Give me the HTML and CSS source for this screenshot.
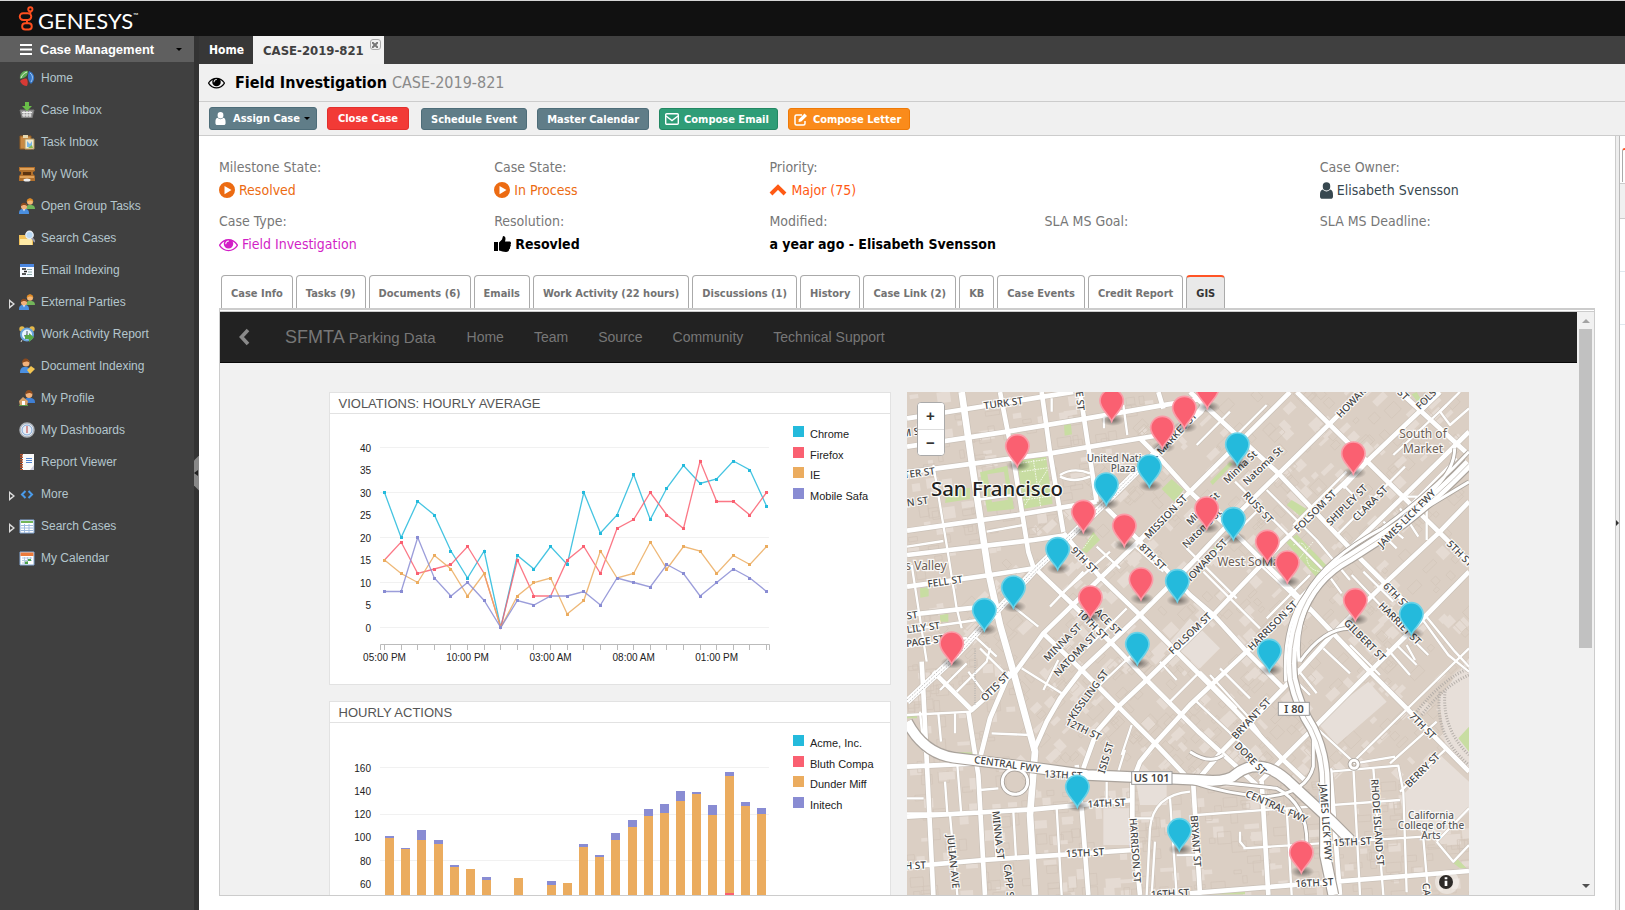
FILE: index.html
```html
<!DOCTYPE html>
<html lang="en">
<head>
<meta charset="utf-8">
<title>CASE-2019-821</title>
<link rel="stylesheet" href="styles.css">
</head>
<body>
<svg class="defs" aria-hidden="true">
  <symbol id="eye" viewBox="0 0 1792 1792"><path d="M1664 960q-152-236-381-353 61 104 61 225 0 185-131.500 316.500t-316.500 131.500-316.500-131.500-131.500-316.500q0-121 61-225-229 117-381 353 133 205 333.500 326.500t434.500 121.500 434.500-121.500 333.500-326.500zm-720-384q0-20-14-34t-34-14q-125 0-214.500 89.500t-89.500 214.500q0 20 14 34t34 14 34-14 14-34q0-86 61-147t147-61q20 0 34-14t14-34zm848 384q0 34-20 69-140 230-376.500 368.500t-499.500 138.500-499.500-139-376.500-368q-20-35-20-69t20-69q140-229 376.500-368t499.500-139 499.500 139 376.500 368q20 35 20 69z"/></symbol>
  <symbol id="play" viewBox="0 0 16 16"><path fill-rule="evenodd" d="M8 0a8 8 0 1 1 0 16A8 8 0 0 1 8 0zM5.500 4v8.200l7-4.100z"/></symbol>
  <symbol id="user" viewBox="0 0 14 18"><rect x="3" y="0" width="8" height="9" rx="4"/><path d="M3 8c2 2.600 6 2.600 8 0 2.500.5 3 3 3 6v1.500c0 1.500-1 2.500-2.500 2.500h-9C1 18 0 17 0 15.500V14c0-3 .5-5.500 3-6z"/></symbol>
  <symbol id="people" viewBox="0 0 16 16"><path d="M7 11c0-4 2-4 4-4s5 0 5 4z" fill="#72b55a"/><circle cx="11" cy="3.800" r="3" fill="#f5b877"/><path d="M7.600 4C8-1 14-1 14.400 4 13 1.700 9.500 2 7.600 4z" fill="#e08a24"/><path d="M0 16c0-5 2-5 5-5s5 0 5 5z" fill="#4a8fe0"/><path d="M4 11h2l-1 2.500z" fill="#fff"/><circle cx="5" cy="8.500" r="3" fill="#f2b27c"/><path d="M1.700 8.500c0-5 6-5 6.600 0C7 6.500 3.500 6.500 1.700 8.500z" fill="#8b4a1e"/></symbol>
  <radialGradient id="shade"><stop offset="0" stop-opacity=".5"/><stop offset="1" stop-opacity="0"/></radialGradient>
  <symbol id="pin" viewBox="0 0 78 104" overflow="visible"><ellipse class="pin-shade" cx="42" cy="95" rx="36" ry="18"/><path class="pin-body" d="M39 99C30 78 4 62 4 38a35 35 0 0 1 70 0c0 24-26 40-35 61z"/></symbol>
</svg>

<header class="brandbar">
  <svg class="logo-mark" viewBox="0 0 16 26" fill="none" stroke="#ff4f1f" stroke-width="2"><circle cx="12.500" cy="3.500" r="2.200"/><rect x="1.500" y="7.500" width="12" height="7" rx="3.500"/><rect x="4" y="18" width="10" height="6.500" rx="3.200"/><path d="M9 14.500V18M12.500 6v2"/></svg>
  <span class="logo-text">GENESYS</span><span class="logo-tm">™</span>
</header>

<div class="shell">
  <nav class="sidebar" aria-label="Case Management">
    <button class="side-head"><svg width="12" height="11" viewBox="0 0 12 11"><path d="M0 1h12M0 5.500h12M0 10h12" stroke="#fff" stroke-width="2"/></svg><span>Case Management</span><i class="caret"></i></button>
    <ul class="side-list">
      <li><a href="#"><svg viewBox="0 0 16 16"><path d="M1 9C0 3 5 0 9 1c0 5-3 7-8 8z" fill="#5cab55"/><path d="M2 8C3 5 5 3 8 2" stroke="#d7f2cd" fill="none"/><path d="M10 1c6 2 7 9 2 13-3-3-4-8-2-13z" fill="#3677c8"/><path d="M11 3c3 2 3 6 1 9" stroke="#a9ccf3" fill="none"/><path d="M1 11c2-2 5-3 7-2 1 2 1 5 0 7-3 0-6-2-7-5z" fill="#d63a35"/></svg>Home</a></li>
      <li><a href="#"><svg viewBox="0 0 16 16"><path d="M1 8h14l-2 8H3z" fill="#999" stroke="#777"/><path d="M3 10.500h10M3 13h9M5 9v6M8 9v6M11 9v6" stroke="#eee"/><path d="M6 0h4v4h3L8 9 3 4h3z" fill="#69bd48"/></svg>Case Inbox</a></li>
      <li><a href="#"><svg viewBox="0 0 16 16"><path d="M1 2h11v13H1z" fill="#c98a45" stroke="#8f5a22"/><path d="M4 1h5v3H4z" fill="#e8d9b0"/><path d="M6 5h9v10H6z" fill="#f2ead0" stroke="#b89a5e"/><path d="m8 7 3 3 2-3v6H8z" fill="#79b6e4"/><path d="M9 14l4-3 1 3z" fill="#88b94f"/></svg>Task Inbox</a></li>
      <li><a href="#"><svg viewBox="0 0 16 16"><path d="M0 1h16v4l-2 1v2l2 2v5H0v-5l2-2V6L0 5z" fill="#b06f2c"/><path d="M1 3h14M1 11h14" stroke="#f0b367" stroke-width="1.500"/><path d="M4 6h8v3H4z" fill="#5c3310"/><ellipse cx="8" cy="14" rx="3.500" ry="1.500" fill="#eee"/></svg>My Work</a></li>
      <li><a href="#"><svg><use href="#people"/></svg>Open Group Tasks</a></li>
      <li><a href="#"><svg viewBox="0 0 16 16"><path d="M0 5h6l1 2h7v8H0z" fill="#f2c25a"/><path d="M1 9h12v6H1z" fill="#ffeaa6"/><circle cx="10.500" cy="5" r="3.700" fill="#b9d9f5" stroke="#e8eef5" stroke-width="1.400"/><path d="m13 8 3 4" stroke="#99a" stroke-width="2"/></svg>Search Cases</a></li>
      <li><a href="#"><svg viewBox="0 0 16 16"><path d="M1 2h14v13H1z" fill="#f7faff"/><path d="M1 2h14v3H1z" fill="#4b87e0"/><path d="M3 7h4M5 9.500h3M3 12h4" stroke="#222" stroke-width="1.500"/><path d="M8 7.500h5M9 10h4M8 12.500h5" stroke="#8aa"/></svg>Email Indexing</a></li>
      <li class="branch"><a href="#"><svg><use href="#people"/></svg>External Parties</a></li>
      <li><a href="#"><svg viewBox="0 0 16 16"><circle cx="3" cy="3" r="2.700" fill="#e4b84a"/><circle cx="13" cy="3" r="2.700" fill="#e4b84a"/><circle cx="8" cy="8.500" r="6" fill="#eaf4fd" stroke="#6aa5dc" stroke-width="2"/><path d="M8 5v4l-3 1" stroke="#456" fill="none"/><path d="M6 9h4V7l5 4.500L10 16v-3H6z" fill="#58a845"/><path d="m3 14-1 2" stroke="#ccc"/></svg>Work Activity Report</a></li>
      <li><a href="#"><svg viewBox="0 0 16 16"><path d="M1 15c0-5 2-6 5-6s6 1 6 6z" fill="#4a8fe0"/><circle cx="7" cy="5" r="3.500" fill="#f2b27c"/><path d="M3 5c0-6 7-6 8 0C9 3 6 3 3 5z" fill="#8b4a1e"/><path d="m8 12 4-4 4 3-5 5z" fill="#f3c552"/></svg>Document Indexing</a></li>
      <li><a href="#"><svg viewBox="0 0 16 16"><path d="M5 13c0-5 2-5 5-5s6 0 6 5z" fill="#3f7fd4"/><circle cx="10" cy="4.500" r="3.400" fill="#f2b27c"/><path d="M6.300 4.500c0-6 7-6 7.400 0-2-2-5-2-7.400 0z" fill="#8b4a1e"/><path d="m0 11 4-4 5 4-1 5H1z" fill="#d6a26a"/><path d="M3 11h3v4H3z" fill="#fff"/><path d="M0 15.500h9" stroke="#5a9c4b"/></svg>My Profile</a></li>
      <li><a href="#"><svg viewBox="0 0 16 16"><circle cx="8" cy="8" r="7" fill="#e9eef5" stroke="#aeb4bb" stroke-width="1.500"/><circle cx="8" cy="8" r="5" fill="none" stroke="#7fa6d6"/><path d="M8 4v7" stroke="#c77" stroke-width="1.500"/></svg>My Dashboards</a></li>
      <li><a href="#"><svg viewBox="0 0 16 16"><path d="M3 0h12v16H3z" fill="#fafafa"/><path d="M2.500 0v16" stroke="#b5532e" stroke-width="3" stroke-dasharray="1.500 1"/><path d="M7 4.500h6M7 6.500h6M7 8.500h6" stroke="#5585d0"/><path d="m15 11-4 5h4z" fill="#ccd"/></svg>Report Viewer</a></li>
      <li class="branch"><a href="#"><svg viewBox="0 0 16 16"><path d="M6.500 5 3 8.500 6.500 12M9.500 5 13 8.500 9.500 12" fill="none" stroke="#4a9bea" stroke-width="2"/></svg>More</a></li>
      <li class="branch"><a href="#"><svg viewBox="0 0 16 16"><path d="M1 2h14v13H1z" fill="#fff" stroke="#83a7d4"/><path d="M2 4h12" stroke="#72b55a" stroke-width="2"/><path d="M2 7.500h12M2 10h12M2 12.500h12M5.500 6v9M10 6v9" stroke="#9ebbe0"/></svg>Search Cases</a></li>
      <li><a href="#"><svg viewBox="0 0 16 16"><path d="M1 2h14v13H1z" fill="#fff" stroke="#83a7d4"/><path d="M1.500 2.500h13V6h-13z" fill="#ec7b3c"/><path d="M3 8h10M3 10.500h10M3 13h6M5.500 7v7M8.500 7v7M11.500 7v4" stroke="#b3c7e2"/><path d="M9 9h3v2H9zM6 11.500h3V14H6z" fill="#4ea14a"/></svg>My Calendar</a></li>
    </ul>
  </nav>
  <div class="splitter"><button class="grip" aria-label="Collapse menu"><i></i></button></div>

  <main class="main">
    <div class="topnav">
      <a href="#" class="toptab">Home</a>
      <a href="#" class="toptab current">CASE-2019-821<span class="close"><svg width="6" height="6" viewBox="0 0 6 6"><path d="m0 0 6 6M6 0 0 6" stroke="#777" stroke-width="2"/></svg></span></a>
    </div>
    <div class="titlebar">
      <svg width="17" height="17"><use href="#eye"/></svg>
      <h1>Field Investigation</h1><span class="case-no">CASE-2019-821</span>
    </div>
    <div class="toolbar">
      <button class="btn tall slate assign"><svg class="white" width="11" height="13"><use href="#user"/></svg>Assign Case<i class="caret"></i></button>
      <button class="btn tall red">Close Case</button>
      <button class="btn slate">Schedule Event</button>
      <button class="btn slate">Master Calendar</button>
      <button class="btn green iconed"><svg width="14" height="12" viewBox="0 0 14 12" fill="none" stroke="#fff" stroke-width="1.400"><rect x=".7" y=".7" width="12.600" height="10.600" rx="1"/><path d="m1 3 6 4.600L13 3"/></svg>Compose Email</button>
      <button class="btn orange iconed"><svg width="14" height="13" viewBox="0 0 14 13"><path d="M8 2H2.500C1.500 2 1 2.500 1 3.500v7c0 1 .5 1.500 1.500 1.500h7c1 0 1.500-.5 1.500-1.500V8" fill="none" stroke="#fff" stroke-width="1.500"/><path d="m4.500 9 .4-2.800L10.500.5 13 3 7.300 8.600z" fill="#fff"/></svg>Compose Letter</button>
    </div>

    <div class="body">
      <section class="case">
        <dl class="facts">
          <div><dt>Milestone State:</dt><dd class="amber"><svg width="16" height="16"><use href="#play"/></svg>Resolved</dd></div>
          <div><dt>Case State:</dt><dd class="amber"><svg width="16" height="16"><use href="#play"/></svg>In Process</dd></div>
          <div><dt>Priority:</dt><dd class="flame"><svg width="18" height="12" viewBox="0 0 18 12"><path d="m2 10 7-7 7 7" fill="none" stroke="currentColor" stroke-width="4"/></svg>Major (75)</dd></div>
          <div></div>
          <div><dt>Case Owner:</dt><dd class="navy"><svg width="13" height="17"><use href="#user"/></svg>Elisabeth Svensson</dd></div>
          <div><dt>Case Type:</dt><dd class="magenta"><svg width="19" height="19"><use href="#eye"/></svg>Field Investigation</dd></div>
          <div><dt>Resolution:</dt><dd class="strong"><svg width="17" height="16" viewBox="0 0 17 16"><path d="M0 6h4v9H0z"/><path d="M5 6.500 8 3.500 9 0c2.500 0 3 2 2 5.500h4.500c1.500 0 2 2 1 3 .6 1 .3 2-.5 2.500.3 1 0 2-.8 2.300C15 15 14 16 12 16c-3 0-4-1-7-1.500z"/></svg>Resovled</dd></div>
          <div><dt>Modified:</dt><dd class="strong">a year ago - Elisabeth Svensson</dd></div>
          <div><dt>SLA MS Goal:</dt></div>
          <div><dt>SLA MS Deadline:</dt></div>
        </dl>

        <div class="tabs">
          <button>Case Info</button><button>Tasks (9)</button><button>Documents (6)</button><button>Emails</button><button>Work Activity (22 hours)</button><button>Discussions (1)</button><button>History</button><button>Case Link (2)</button><button>KB</button><button>Case Events</button><button>Credit Report</button><button class="active">GIS</button>
        </div>

        <div class="frame">
          <div class="dash">
            <nav class="dashnav">
              <a href="#" class="back" aria-label="Back"><svg width="12" height="18" viewBox="0 0 12 18"><path d="M10 2 3.500 9l6.500 7" fill="none" stroke="#8a8a8a" stroke-width="3.600"/></svg></a>
              <a href="#" class="dashbrand"><span>SFMTA</span> Parking Data</a>
              <a href="#">Home</a><a href="#">Team</a><a href="#">Source</a><a href="#">Community</a><a href="#">Technical Support</a>
            </nav>
            <div class="grid">
              <div class="col">
                <article class="card"><h2>VIOLATIONS: HOURLY AVERAGE</h2><svg id="lines" class="chart" viewBox="0 0 560 270"></svg></article>
                <article class="card"><h2>HOURLY ACTIONS</h2><svg id="bars" class="chart" viewBox="0 0 560 270"></svg></article>
              </div>
              <div class="map">
                <svg class="mapart" viewBox="21 21 1686 1509" preserveAspectRatio="xMinYMin slice">
                  <defs>
                    <g id="r-small">
                      <path d="M21 485 130 468M21 735l210-30M21 785l180-26M225 345l115-15M260 440l110-20M455 40v40M670 60l12 90M612 90v40M100 240l40 240 30 190 15 60M35 540l45 290M60 980l12 120"/>
                      <path d="M450 665 550 560M590 485l70 65M480 270q40-25 90-5M480 275q40 20 90 0M340 665l75 60M225 755l65 60M120 915l80-80M170 920l90-90 10-40M205 860l45 60M240 790l70 70"/>
                      <path d="M21 990 215 980M115 985l8 85M165 985v60M275 1045l115 5M172 1140l12 150M135 1190l7 95H21M240 1215l55-5M340 1280l8 140M280 1285l10 140M150 1290l22 240M470 1270l15 260M21 1240h50M430 915l45-90M365 850l120 75M620 1190v70M655 1160l20-65M695 1020l-30 90"/>
                      <path d="M480 630l150-130M800 560l140 140M860 490l150 150M700 480l90 80M560 790l120-120M600 900l100-95M810 950l90-90M780 830l50 55M1010 970l-110-110M1050 940l-90-90M740 885l-80-85"/>
                      <path d="M1005 290l150 150 130 130 40 55M1100 315l150 150 100 120M1070 380l-130 130M1330 310l150-160M1180 420l160-160M1315 445l200-200M1390 500l130-130 150-150M1230 570l-130 130M910 560l170 170M1060 520l170 160M1330 300l40 40M1450 410l60 50M1430 430l60 60M1500 370l55 85M1520 335h60v130M1355 570l200 210 30 30M1390 560l90 90M890 180l100-100M1000 160l100-100M1480 210l160-150"/>
                      <path d="M1620 80l60-60M1620 80l30 40 57-50M1190 850l60 75M1180 880l50 50M1270 790l80 75M1350 780l90 90M1520 780l25 45M1460 790l70 80M1490 780l60 60M1565 700l80 110 62 50M1575 690l90 110 42 45"/>
                      <path d="M1365 1125 1707 790M1240 1020l125 115 120-20M1290 1160l205-18 15 80 10 300M1360 1145l20 385M1420 1150l30 380M1500 1220l140-130M1470 1135l140-125M890 1290l610-45M1030 1390l540-35M1160 1270l15 260M1570 1360l15 170M1610 1370l97-100M1610 1370l50 60 47-50M1020 1340v30l15 18M930 870l110 120 50 70M890 950l160 150"/>
                      <path d="M755 1530l10-160M700 1300h60M740 1530l10-200q10-100 120-110M810 1240l20 290M830 1410h60"/>
                    </g>
                    <g id="r-mid">
                      <path d="M21 100 200 72 430 35 520 21M21 185l300-45 240-40 220-38 120-20M21 262l430-57 330-55M21 437l330-47 240-40M21 510l380-45 100-15M21 605l250-35 130-20M21 690l230-25"/>
                      <path d="M300 21l45 230 40 250 15 45M425 21l25 180 40 240M540 21l50 330M775 21l15 50M65 830l5 90 30 610M205 980l30 190 20 360M100 860l115 115 130-115M330 860l-60 140-30 120M530 1140l15 130 20 260M21 1145l210-10M21 1295l380-22 300-28M21 1445l230-20 450-30"/>
                      <path d="M400 545l120 115 120 120 100 105 160 160 170 155M490 445l110 130 115 110 155 155 130 130 150 155 70 65M620 370l100 100 150 160 70 60 100 110 110 110M720 160l60 60 90 100 160 150 170 170 100 105 110 115 110 110 187 190M870 21l265 244 215 225 110 110 110 100M1190 21l517 509M1500 21l207 189M430 745l115 110 110 110 110 110 90 95"/>
                      <path d="M340 870l90-125 170-165L870 320 1170 21M400 1100l40-90 40-70 65-85L720 690l150-150 160-170 260-255 95-94M550 1150l40-110 65-75 85-80 200-195 210-220 250-240L1620 21"/>
                      <path d="M720 1530l-23-230v-110l23-60 45-55 105-115 170-160 160-160 150-150 160-155 197-195M900 1530l-20-330 85-100 185-190 150-165 160-155 160-150 87-90M1080 1190l160-160 170-170 140-140 157-160M1085 1190l20 340M1290 1150l30 380M870 1525l837-67"/>
                    </g>
                    <g id="r-major">
                      <path d="M185 21l30 209 50 330 35 160 40 140 65 240-15 190 15 240M21 950l129-120 250-270 220-210 160-160L900 80l40-59"/>
                    </g>
                    <g id="r-fwy">
                      <path d="M1707 235q-90 95-200 180-80 55-160 105-110 60-150 180-30 90-20 180 20 90 60 150 40 80 38 180v200l25 120"/>
                      <path d="M21 1010q50 95 140 108l240 30 160 22 340 15q80 10 110-20 70-50 150 20l130 120 60 60"/>
                    </g>
                    <g id="r-ramp">
                      <path d="M1707 200q-120 130-260 230-170 90-230 200-70 90-60 260M1707 290q-150 90-260 160-150 80-220 200-40 80-30 180M870 1190q120 40 230 45 120-10 140-90v-120M1220 1400q10-140-90-190-160-20-240-20M1664 190q0 60-60 120-40 50-60 80M1200 830q70-100 150-100M870 1100q60 40 100 10"/>
                      <circle cx="345" cy="1190" r="38"/><circle cx="1362" cy="1138" r="12"/>
                    </g>
                  </defs>
                  <rect class="land" x="0" y="0" width="1800" height="1700"/>
                  <g id="blocks"></g>
                  <g class="pale"><path d="M640 1270h50v110h-80v-110zM710 1200h90v60h-80zM870 700l90 90-60 60-90-80zM1405 890l55 60-150 130-60-70zM1500 1240l120-130 87 80v90l-100 90-90-60zM1707 820l-90 120 20 150 70 60z"/></g>
                  <g class="park"><path d="m352 228 86-14 20 142-88 16zM240 262l82-20 20 130-80 8zM140 320l70-12v34l-75 12zM492 118l20-4 4 34-22 4zM785 312l30-30 36 32-28 36zM545 495l35-55 20 25-40 40zM60 610l26-4v28l-25 4zM120 690l25-4v24h-24zM930 290l60-60 8 8-60 62zM1160 360l15-15 50 30-10 30zM1158 472l32-24 92 96-34 32zM940 490l15-15 10 15-15 15zM1675 1060l32-35v75zM21 985h30v15H21zM150 1102h70v12h-70zM940 1523l95-5v10h-95zM1655 1430l15-10 30 30h-20zM1535 28l15-7 15 25-12 5z"/></g>
                  <path class="land" d="m262 268 50-8 12 84-48 8z"/>
                  <g class="track"><path d="M1550 980q80-100 157-130M1565 990q70-90 142-120M1620 920q-20 130 87 220M1635 920q-10 110 72 190"/></g>
                  <path class="path" d="M360 235l80-12M365 260l80-12M370 345l85-12M400 225l22 140M375 360l70-110M1180 480q40-20 40 30t50 50M1190 530l50-60M550 490l30-40"/>
                  <g class="casing"><use href="#r-small" class="w-small"/><use href="#r-mid" class="w-mid"/><use href="#r-major" class="w-major"/></g>
                  <g class="fill"><use href="#r-small" class="w-small"/><use href="#r-mid" class="w-mid"/><use href="#r-major" class="w-major"/></g>
                  <g class="casing dark"><use href="#r-ramp" class="w-ramp"/><use href="#r-fwy" class="w-fwy"/></g>
                  <g class="fill"><use href="#r-ramp" class="w-ramp"/><use href="#r-fwy" class="w-fwy"/></g>
                  <path class="median" d="M1707 235q-90 95-200 180-80 55-160 105-110 60-150 180-30 90-20 180 20 90 60 150 40 80 38 180"/>
                  <path class="tram" d="M21 945l129-120 250-270 220-210 90-90"/>
                  <path class="tram" d="M26 952l129-120 250-270 220-210 90-90M225 790v170"/>
                  <g id="labels"></g>
                  <g class="shield"><rect x="695" y="1160" width="121" height="38"/><rect x="1135" y="952" width="93" height="39"/><text x="755" y="1191">US 101</text><text x="1182" y="983">I 80</text></g>
                  <g id="pins"></g>
                  <circle class="info-halo" cx="1641" cy="1491" r="36"/><circle class="info-dot" cx="1638" cy="1491" r="21"/><path d="M1634 1487h8v16h-8zM1634 1477h8v6h-8z" fill="#fff"/>
                </svg>
                <div class="zoomer"><button aria-label="Zoom in">+</button><button aria-label="Zoom out">−</button></div>
              </div>
            </div>
          </div>
          <div class="scroll"><i class="up"></i><div class="thumb"></div><i class="down"></i></div>
        </div>
      </section>
      <div class="rail"><i></i></div>
      <aside class="peek"><div class="peek-tabs"><div class="peek-tab"></div></div><div class="peek-head"></div><div class="peek-row"></div><div class="peek-row"></div></aside>
    </div>
  </main>
</div>
<script src="script.js"></script>
</body>
</html>
```
FILE: styles.css
```css
* { box-sizing: border-box; }
:root { --ui: "DejaVu Sans Condensed", "DejaVu Sans", "Noto Sans", sans-serif; --sans: "Liberation Sans", Arial, sans-serif; }
body { margin: 0; height: 100vh; display: flex; flex-direction: column; font-family: var(--ui); font-size: 14px; background: #fff; overflow: hidden; }
button { font: inherit; margin: 0; cursor: pointer; }
a { color: inherit; text-decoration: none; }
.defs { position: absolute; width: 0; height: 0; }
.caret { display: inline-block; border: 3px solid transparent; border-top-color: #000; border-bottom: 0; }

.brandbar { height: 36px; flex: none; background: #111; border-top: 1px solid #d5d5d5; display: flex; align-items: center; padding-left: 18px; color: #fff; }
.logo-mark { width: 16px; height: 25px; }
.logo-text { font: 22px/28px Lato, sans-serif; margin: 5px 0 0 4px; }
.logo-tm { font: 7px/8px Lato, sans-serif; margin-bottom: 8px; }

.shell { flex: 1; min-height: 0; display: flex; }
.sidebar { width: 194px; flex: none; background: #404040; font-family: var(--sans); }
.side-head { width: 100%; height: 26px; border: 0; padding: 0 12px 0 20px; background: #5f5f5f; color: #fff; display: flex; align-items: center; gap: 8px; font: bold 13px var(--sans); }
.side-head .caret { margin-left: auto; }
.side-list { list-style: none; margin: 0; padding: 0; }
.side-list li { height: 32px; padding-left: 19px; position: relative; }
.side-list a { height: 32px; display: flex; align-items: center; gap: 6px; font-size: 12px; color: #b4c6cd; }
.side-list svg { width: 16px; height: 16px; }
.branch::before { content: ""; position: absolute; left: 9px; top: 13px; border: 5px solid transparent; border-left: 6px solid #ddd; border-right: 0; }
.branch::after { content: ""; position: absolute; left: 10px; top: 16px; border: 2px solid transparent; border-left: 3px solid #404040; border-right: 0; }
.splitter { width: 5px; flex: none; background: #333; display: flex; align-items: center; }
.grip { width: 5px; height: 35px; border: 0; padding: 0; background: #888; clip-path: polygon(0 5px, 100% 0, 100% 100%, 0 30px); }
.grip i { display: block; width: 0; border: 3px solid transparent; border-right: 4px solid #222; border-left: 0; }

.main { flex: 1; min-width: 0; display: flex; flex-direction: column; }
.topnav { height: 28px; flex: none; background: #404040; display: flex; }
.toptab { padding: 0 9px 0 10px; line-height: 29px; font-weight: bold; font-size: 13px; color: #fff; background: #373737; }
.toptab:first-child { font-size: 12px; }
.current { background: #f1f1f1; color: #404040; display: flex; gap: 6px; padding-right: 3px; }
.close { width: 11px; height: 11px; margin-top: 3px; border: 1px solid #aaa; border-radius: 3px; display: grid; place-items: center; }
.titlebar { height: 38px; flex: none; background: #f0f0f0; border-bottom: 1px solid #ccc; display: flex; align-items: center; padding-left: 9px; }
.titlebar h1 { margin: 0 5px 0 10px; font-size: 16px; line-height: 20px; }
.case-no { font-size: 16px; line-height: 20px; color: #8a8a8a; }
.toolbar { height: 34px; flex: none; background: #f0f0f0; border-bottom: 1px solid #ccc; display: flex; align-items: flex-start; gap: 10px; padding: 5px 10px; }
.btn { height: 22px; margin-top: 1px; padding: 0 9px; border: 1px solid #4e6d79; border-radius: 3px; color: #fff; font-size: 11px; font-weight: bold; display: flex; align-items: center; gap: 5px; white-space: nowrap; }
.tall { height: 23px; margin-top: 0; }
.slate { background: #607d88; }
.red { background: #f23a36; border-color: #e22f2c; margin-right: 2px; padding: 0 10px; }
.green { background: #2f9d77; border-color: #238762; }
.orange { background: #fa8b1b; border-color: #ee7a08; }
.iconed { padding: 0 8px 0 5px; }
.assign { padding: 0 6px 0 5px; gap: 7px; }
.assign .caret { margin-left: -3px; }
.white { fill: #fff; }

.body { flex: 1; min-height: 0; display: flex; }
.case { flex: 1; min-width: 0; display: flex; flex-direction: column; padding: 20px 20px 14px; }
.facts { margin: 0; display: grid; grid-template-columns: repeat(5, 1fr); grid-auto-rows: 54px; }
.facts dt { line-height: 22px; color: #777; }
.facts dd { margin: 0; height: 24px; display: flex; align-items: center; gap: 4px; white-space: nowrap; }
.facts svg { fill: currentColor; }
.amber { color: #ec6b12; }
.flame { color: #ff5a14; }
.navy { color: #37474f; }
.magenta { color: #d21fc6; }
.strong { color: #000; font-weight: bold; }
dd.strong { font-size: 14px; }

.tabs { display: flex; gap: 3px; margin-top: 11px; padding-left: 2px; border-bottom: 1px solid #ccc; }
.tabs button { height: 33px; padding: 2px 9px 0; border: 1px solid #aaa; border-bottom: 0; border-radius: 4px 4px 0 0; background: #fff; color: #737373; font-size: 11px; font-weight: bold; white-space: nowrap; }
.tabs .active { border-top: 2px solid #ff5426; background: #e9e9e9; color: #333; }
.frame { flex: 1; min-height: 0; border: 1px solid #ccc; border-top: 3px double #ccc; display: flex; overflow: hidden; }
.dash { flex: 1; min-width: 0; background: #f1f1f1; font-family: var(--sans); overflow: hidden; }
.dashnav { height: 51px; background: #222; border-bottom: 1px solid #080808; display: flex; align-items: center; padding-left: 3px; font-size: 14px; color: #777; }
.dashnav a { padding: 0 15px; }
.dashnav .back { height: 18px; }
.dashnav .dashbrand { padding: 0 16px 0 20px; font-size: 15px; }
.dashbrand span { font-size: 18px; }
.grid { max-width: 1140px; margin: 29px auto 0; display: grid; grid-template-columns: 1fr 1fr; gap: 16px; }
.col { display: grid; gap: 16px; align-content: start; }
.card { background: #fff; border: 1px solid #e2e2e2; }
.card h2 { margin: 0; height: 21px; border-bottom: 1px solid #e2e2e2; padding-left: 9px; font-size: 13px; line-height: 21px; font-weight: normal; color: #555; }
.chart { display: block; width: 100%; font: 10px var(--sans); }
.chart .gridline { stroke: #f1f1f1; }
.chart .axis { stroke: #bbb; fill: none; }
.chart .ylab { text-anchor: end; }
.chart .xlab { text-anchor: middle; }
.chart .legend { font-size: 11px; }
.chart text { fill: #222; }
.chart .series { fill: none; stroke-width: 1.3; stroke-opacity: .85; }

.map { position: relative; overflow: hidden; }
.mapart { display: block; width: 100%; font-family: "Noto Sans", "Open Sans", sans-serif; }
.land { fill: #dbcfc4; }
.pale { fill: #e7dfd9; }
.park { fill: #c8dda2; }
.casing { fill: none; stroke: #c9c0b7; stroke-linejoin: round; }
.casing.dark { stroke: #aaa39c; }
.fill { fill: none; stroke: #fff; stroke-linejoin: round; }
.casing .w-small { stroke-width: 10px; } .fill .w-small { stroke-width: 7px; }
.casing .w-mid { stroke-width: 18px; } .fill .w-mid { stroke-width: 14px; }
.casing .w-major { stroke-width: 24px; } .fill .w-major { stroke-width: 20px; }
.casing .w-ramp { stroke-width: 14px; } .fill .w-ramp { stroke-width: 9px; }
.casing .w-fwy { stroke-width: 36px; } .fill .w-fwy { stroke-width: 29px; }
.median { fill: none; stroke: #c9c4bf; stroke-width: 3px; }
.tram { fill: none; stroke: #aaa; stroke-width: 3px; stroke-dasharray: 3 4; }
.track { fill: none; stroke: #b5afaa; stroke-width: 9px; stroke-dasharray: 3 5; }
.path { fill: none; stroke: #f4f8ea; stroke-width: 3px; stroke-dasharray: 5 3; }
.maplabel { text-anchor: middle; fill: #444; stroke: #fff; stroke-width: 7px; stroke-opacity: .85; paint-order: stroke; font-size: 30px; font-weight: 500; }
.maplabel.place { font-size: 36px; fill: #6d5f56; font-weight: 400; }
.maplabel.poi { font-size: 30px; fill: #5c5c5c; }
.maplabel.city { font-size: 61px; fill: #222; }
.shield { text-anchor: middle; font-size: 33px; font-weight: 600; }
.shield rect { fill: #fff; stroke: #999; stroke-width: 3px; }
.shield text { fill: #444; }
.pin-shade { fill: url(#shade); stroke: none; }
.pin-body { stroke-width: 5px; }
.pink { fill: #fa6071; stroke: #fb9ba7; }
.blue { fill: #24badc; stroke: #6bd2e8; }
.info-halo { fill: #fff; opacity: .4; }
.info-dot { fill: #2d2a28; }
.zoomer { position: absolute; left: 10px; top: 10px; width: 28px; border: 1px solid #aaa; border-radius: 4px; overflow: hidden; background: #fff; }
.zoomer button { display: block; width: 26px; height: 26px; border: 0; padding: 0; background: #fff; font: bold 15px/26px var(--sans); color: #333; }
.zoomer button + button { border-top: 1px solid #ddd; line-height: 24px; }
.scroll { width: 17px; flex: none; background: #f1f1f1; display: flex; flex-direction: column; align-items: center; padding: 7px 2px; }
.thumb { width: 13px; height: 56%; margin-top: 6px; margin-bottom: auto; background: #c1c1c1; }
.up { border: 4px solid transparent; border-bottom-color: #a3a3a3; border-top: 0; }
.down { border: 4px solid transparent; border-top-color: #505050; border-bottom: 0; }

.rail { width: 5px; flex: none; background: #eee; border-left: 1px solid #ccc; border-right: 1px solid #bbb; display: flex; align-items: center; }
.rail i { border: 3px solid transparent; border-left: 3px solid #333; border-right: 0; }
.peek { width: 5px; flex: none; }
.peek-tabs { height: 48px; padding: 12px 0 0 2px; border-bottom: 1px solid #ccc; }
.peek-tab { height: 34px; border-left: 1px solid #aaa; border-top: 2px solid #ff5426; border-top-left-radius: 4px; }
.peek-head { height: 35px; background: #f0f0f0; border-bottom: 1px solid #ccc; }
.peek-row { height: 53px; border-bottom: 1px solid #dfe8ee; }
```
FILE: script.js
```js
const NS = 'http://www.w3.org/2000/svg';
const COLORS = ['#24badc', '#fa6071', '#ebac5f', '#898cd3'];

function add(parent, tag, attrs, text) {
  const el = document.createElementNS(NS, tag);
  for (const key in attrs) el.setAttribute(key, attrs[key]);
  if (text !== undefined) el.textContent = text;
  parent.appendChild(el);
  return el;
}

function legend(svg, names) {
  names.forEach((name, i) => {
    const y = 12 + Math.round(i * 20.6);
    add(svg, 'rect', { x: 463, y, width: 11, height: 11, fill: COLORS[i] });
    add(svg, 'text', { x: 480, y: y + 12, class: 'legend' }, name);
  });
}

/* Hourly violations per browser */
const lines = document.getElementById('lines');
const series = [
  [30,20,28,25,17,11,17,0,16,13,18,14,30,21,25,34,24,31,36,32,33,37,35,27],
  [15,19,12,13,14,18,12,0,15,7,7,15,18,12,22,24,30,25,22,37,28,28,25,30],
  [15,12,10,16,13,7,12,0,7,10,11,3,6,17,11,12,19,13,18,17,12,16,14,18],
  [8,8,20,11,7,10,6,0,6,5,7,7,8,5,11,10,9,14,12,7,10,13,11,8]
];
const px = i => 54.5 + i * 16.61;
const py = v => 213.5 - v * 4.5;
for (let v = 0; v <= 40; v += 5) {
  if (v % 10 === 0) add(lines, 'line', { x1: 50, x2: 439, y1: py(v), y2: py(v), class: 'gridline' });
  add(lines, 'text', { x: 41, y: Math.round(py(v)) + 4, class: 'ylab' }, v);
}
let ticks = 'M50.5 236v-5.500h389v5.500';
for (let i = 0; i < 24; i++) ticks += `M${Math.floor(px(i)) + 0.5} 230v6`;
add(lines, 'path', { d: ticks, class: 'axis' });
['05:00 PM', '10:00 PM', '03:00 AM', '08:00 AM', '01:00 PM'].forEach((t, i) =>
  add(lines, 'text', { x: px(i * 5), y: 247, class: 'xlab' }, t));
series.forEach((data, s) => {
  add(lines, 'polyline', { points: data.map((v, i) => px(i) + ',' + py(v)).join(' '), class: 'series', stroke: COLORS[s] });
  data.forEach((v, i) => add(lines, 'rect', { x: Math.round(px(i) - 1.5), y: Math.round(py(v) - 1.5), width: 3, height: 3, fill: COLORS[s] }));
});
legend(lines, ['Chrome', 'Firefox', 'IE', 'Mobile Safa']);

/* Stacked hourly actions per customer: [total, third series top] */
const bars = document.getElementById('bars');
const by = v => 230.5 - v * 1.1625;
for (let v = 60; v <= 160; v += 20) {
  if (v % 40 === 0) add(bars, 'line', { x1: 50, x2: 439, y1: Math.floor(by(v)) + 0.5, y2: Math.floor(by(v)) + 0.5, class: 'gridline' });
  add(bars, 'text', { x: 41, y: Math.round(by(v)) + 4, class: 'ylab' }, v);
}
const stacks = [[101,99],[91,90],[106,98],[98,94],[76,74],[73,73],[66,63],[0,0],[65,65],[0,0],[62,59],[61,61],[94,92],[85,83],[104,98],[115,109],[124,118],[129,121],[140,131],[139,137],[128,119],[156,153],[130,127],[125,120]];
stacks.forEach(([total, third], i) => {
  const x = Math.round(55 + i * 16.17);
  const top = Math.round(by(total)), mid = Math.round(by(third));
  add(bars, 'rect', { x, y: top, width: 9, height: 231 - top, fill: COLORS[3] });
  add(bars, 'rect', { x, y: mid, width: 9, height: 231 - mid, fill: COLORS[2] });
  if (i === 21) add(bars, 'rect', { x, y: 170, width: 9, height: 61, fill: COLORS[1] });
});
legend(bars, ['Acme, Inc.', 'Bluth Compa', 'Dunder Miff', 'Initech']);

/* City blocks: building footprints follow the angle of the nearest street grid */
let seed = 7;
const rnd = () => (seed = (seed * 16807) % 2147483647) / 2147483647;
const blocks = document.getElementById('blocks');
for (let i = 0; i < 1100; i++) {
  const x = 21 + rnd() * 1686, y = 21 + rnd() * 1509;
  let angle = -44;
  if (x + y < 820) angle = -8;
  else if (y > 1180 || (x < 330 && y > 820)) angle = -4;
  const w = 12 + rnd() * 34, h = 10 + rnd() * 26, pale = rnd() < 0.4;
  add(blocks, 'rect', {
    x, y, width: w, height: h, transform: `rotate(${angle} ${x} ${y})`,
    fill: pale ? '#e5dbd3' : 'none', stroke: pale ? 'none' : '#d2c5b9', 'stroke-width': 2
  });
}

/* Map labels: text, centre x, centre y, angle, kind */
const labels = document.getElementById('labels');
[
  ['TURK ST',310,54,-8],['M ST',40,140,-8],['E ST',541,48,84],['TER ST',58,263,-8],['N ST',52,349,-8],
  ['FELL ST',135,589,-8],['ST',36,690,-8],['LILY ST',70,727,-8],['PAGE ST',75,768,-8],
  ['MARKET ST',830,145,-47],['MISSION ST',797,395,-46],['9TH ST',553,525,45],['8TH ST',758,515,45],['HOWARD ST',915,530,-46],
  ['10TH ST',577,718,45],['GRACE ST',610,695,45],['MINNA ST',487,772,-45],['NATOMA ST',525,808,-46],['FOLSOM ST',870,745,-44],
  ['Natoma St',905,430,-45],['Minna St',908,370,-45],['Minna St',1020,245,-44],['Natoma St',1088,242,-44],['RUSS ST',1075,367,47],
  ['HOWARD ST',1375,30,-46],['ST',1510,28,45],['FOLSOM ST',1610,10,-45],['FOLSOM ST',1245,378,-45],['SHIPLEY ST',1340,360,-45],['CLARA ST',1410,355,-45],
  ['JAMES LICK FWY',1520,400,-45],['5TH ST',1680,505,45],['6TH ST',1490,632,45],['HARRIET ST',1500,715,45],['GILBERT ST',1395,765,45],
  ['HARRISON ST',1117,722,-45],['OTIS ST',285,905,-45],['KISSLING ST',565,928,-53],['12TH ST',550,1032,26],['ISIS ST',617,1118,-73],
  ['CENTRAL FWY',322,1137,8],['13TH ST',490,1169,3],['14TH ST',620,1254,-3],['15TH ST',555,1403,-3],['16TH ST',810,1525,-3],['H ST',46,1441,-3],
  ['MINNA ST',295,1350,84],['JULIAN AVE',160,1430,84],['CAPP ST',328,1495,84],['HARRISON ST',706,1396,86],['BRYANT ST',888,1368,86],
  ['BRYANT ST',1053,1001,-47],['DORE ST',1052,1120,46],['CENTRAL FWY',1130,1264,24],['JAMES LICK FWY',1278,1312,86],['7TH ST',1568,1022,45],
  ['BERRY ST',1567,1155,-45],['RHODE ISLAND ST',1433,1312,86],['15TH ST',1357,1370,-3],['16TH ST',1243,1493,-3],['CAROLINA ST',1585,1590,86],
  ['San Francisco',291,312,0,'city'],['s Valley',78,541,0,'place'],['United Nations',668,221,0,'poi'],['Plaza',670,251,0,'poi'],
  ['South of',1569,147,0,'place'],['Market',1569,191,0,'place'],['West SoMa',1045,530,0,'place'],
  ['California',1593,1292,0,'poi'],['College of the',1593,1321,0,'poi'],['Arts',1593,1350,0,'poi']
].forEach(([text, x, y, angle, kind]) => {
  const shift = kind === 'city' ? 20 : kind === 'place' ? 13 : 11;
  add(labels, 'text', { x, y: y + shift, transform: `rotate(${angle} ${x} ${y})`, class: 'maplabel ' + (kind || '') }, text);
});

/* Pins: tip x, tip y */
const pins = document.getElementById('pins');
const drop = (list, cls) => list.map(([x, y]) => ({ x, y, cls }));
[
  ...drop([[352,243],[635,107],[922,68],[853,128],[787,188],[1360,265],[550,440],[673,482],[920,430],[1102,530],[1162,592],[723,643],[571,697],[1366,705],[155,835],[1204,1462]], 'pink'),
  ...drop([[1012,238],[748,304],[619,358],[1000,462],[473,552],[340,667],[253,735],[832,648],[712,837],[1534,747],[1108,857],[532,1265],[838,1395]], 'blue')
].sort((a, b) => a.y - b.y).forEach(p =>
  add(pins, 'use', { href: '#pin', x: p.x - 39, y: p.y - 97, width: 78, height: 104, class: p.cls }));
```
